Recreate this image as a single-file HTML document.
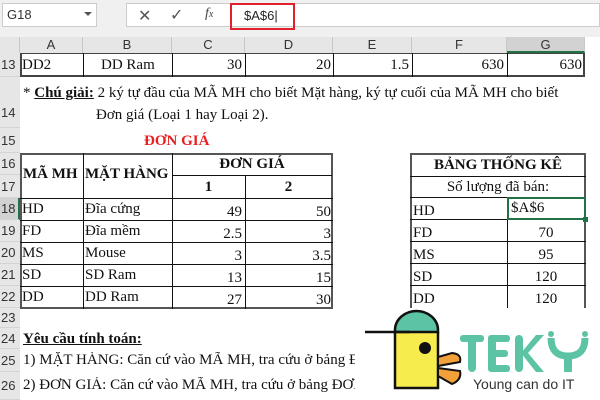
<!DOCTYPE html>
<html><head><meta charset="utf-8"><style>
*{margin:0;padding:0;box-sizing:border-box}
body{width:600px;height:400px;overflow:hidden;background:#fff;position:relative;font-family:"Liberation Serif",serif;color:#111}
.a{position:absolute}
.s{font-family:"Liberation Sans",sans-serif}
.rn{position:absolute;left:0;width:20px;background:#e6e6e6;font-family:"Liberation Sans",sans-serif;font-size:13px;color:#333;text-align:left;padding-left:1px;border-bottom:1px solid #d4d4d4}
.ch{position:absolute;top:37px;height:16px;background:#e6e6e6;font-family:"Liberation Sans",sans-serif;font-size:13px;color:#333;text-align:center;line-height:16px;border-right:1px solid #c8c8c8}
.t{font-size:15px;white-space:nowrap}
.hl{position:absolute;height:1px;background:#111}
.vl{position:absolute;width:1px;background:#111}
</style></head><body>
<div class="a" style="left:0;top:0;width:600px;height:37px;background:#f0f0f0"></div>
<div class="a s" style="left:2px;top:3px;width:95px;height:24px;background:#fff;border:1px solid #ccc;font-size:13px;line-height:22px;padding-left:4px;color:#333">G18</div>
<div class="a" style="left:84px;top:12px;width:0;height:0;border-left:4px solid transparent;border-right:4px solid transparent;border-top:4px solid #555"></div>
<div class="a" style="left:126px;top:3px;width:474px;height:24px;background:#fff;border:1px solid #ccc"></div>
<div class="a s" style="left:138px;top:6px;font-size:16px;color:#555">✕</div>
<div class="a s" style="left:170px;top:5px;font-size:16px;color:#555">✓</div>
<div class="a" style="left:205px;top:6px;font-size:14px;font-style:italic;color:#444">f<span style="font-size:10px">x</span></div>
<div class="a" style="left:230px;top:3px;width:65px;height:27px;border:2px solid #e0202a"></div>
<div class="a s" style="left:244px;top:8px;font-size:13px;color:#222">$A$6|</div>
<div class="ch" style="left:0;width:20px"></div>
<div class="ch" style="left:20px;width:63px">A</div>
<div class="ch" style="left:83px;width:89px">B</div>
<div class="ch" style="left:172px;width:73px">C</div>
<div class="ch" style="left:245px;width:88px">D</div>
<div class="ch" style="left:333px;width:79px">E</div>
<div class="ch" style="left:412px;width:95px">F</div>
<div class="ch" style="left:507px;width:78px;background:#d2d2d2;border-bottom:2px solid #217346">G</div>
<div class="ch" style="left:585px;width:15px;background:#fff;border:none"></div>
<div class="rn" style="top:53px;height:24px;line-height:24px">13</div>
<div class="rn" style="top:77px;height:51px;line-height:72px">14</div>
<div class="rn" style="top:128px;height:25px;line-height:26px">15</div>
<div class="rn" style="top:153px;height:22px;line-height:22px">16</div>
<div class="rn" style="top:175px;height:23px;line-height:23px">17</div>
<div class="rn" style="top:198px;height:22px;line-height:22px;background:#d2d2d2;border-right:2px solid #217346">18</div>
<div class="rn" style="top:220px;height:22px;line-height:22px">19</div>
<div class="rn" style="top:242px;height:22px;line-height:22px">20</div>
<div class="rn" style="top:264px;height:22px;line-height:22px">21</div>
<div class="rn" style="top:286px;height:22px;line-height:22px">22</div>
<div class="rn" style="top:308px;height:20px;line-height:20px">23</div>
<div class="rn" style="top:328px;height:21px;line-height:21px">24</div>
<div class="rn" style="top:349px;height:23px;line-height:23px">25</div>
<div class="rn" style="top:372px;height:28px;line-height:28px">26</div>
<div class="a" style="left:20px;top:53px;width:565px;height:24px;border:2px solid #444;border-top:1px solid #444"></div>
<div class="vl" style="left:83px;top:53px;height:24px"></div>
<div class="vl" style="left:172px;top:53px;height:24px"></div>
<div class="vl" style="left:245px;top:53px;height:24px"></div>
<div class="vl" style="left:333px;top:53px;height:24px"></div>
<div class="vl" style="left:412px;top:53px;height:24px"></div>
<div class="vl" style="left:507px;top:53px;height:24px"></div>
<div class="a t" style="left:22px;top:57px">DD2</div>
<div class="a t" style="left:101px;top:57px">DD Ram</div>
<div class="a t" style="left:172px;top:57px;width:70px;text-align:right">30</div>
<div class="a t" style="left:245px;top:57px;width:86px;text-align:right">20</div>
<div class="a t" style="left:333px;top:57px;width:76px;text-align:right">1.5</div>
<div class="a t" style="left:412px;top:57px;width:92px;text-align:right">630</div>
<div class="a t" style="left:507px;top:57px;width:75px;text-align:right">630</div>
<div class="a t" style="left:23px;top:85px">* <b><u>Chú giải:</u></b> 2 ký tự đầu của MÃ MH cho biết Mặt hàng, ký tự cuối của MÃ MH cho biết</div>
<div class="a t" style="left:96px;top:107px">Đơn giá (Loại 1 hay Loại 2).</div>
<div class="a t" style="left:144px;top:133px;color:#e82020;font-weight:bold">ĐƠN GIÁ</div>
<div class="a" style="left:20px;top:153px;width:313px;height:156px;border:2px solid #555"></div>
<div class="vl" style="left:83px;top:153px;height:156px"></div>
<div class="vl" style="left:172px;top:153px;height:156px"></div>
<div class="vl" style="left:245px;top:175px;height:134px"></div>
<div class="hl" style="left:172px;top:175px;width:160px"></div>
<div class="hl" style="left:20px;top:198px;width:313px"></div>
<div class="hl" style="left:20px;top:220px;width:313px"></div>
<div class="hl" style="left:20px;top:242px;width:313px"></div>
<div class="hl" style="left:20px;top:264px;width:313px"></div>
<div class="hl" style="left:20px;top:286px;width:313px"></div>
<div class="a t" style="left:23px;top:166px;font-weight:bold">MÃ MH</div>
<div class="a t" style="left:85px;top:166px;font-weight:bold">MẶT HÀNG</div>
<div class="a t" style="left:172px;top:156px;width:160px;text-align:center;font-weight:bold">ĐƠN GIÁ</div>
<div class="a t" style="left:172px;top:179px;width:73px;text-align:center;font-weight:bold">1</div>
<div class="a t" style="left:245px;top:179px;width:87px;text-align:center;font-weight:bold">2</div>
<div class="a t" style="left:22px;top:201px">HD</div>
<div class="a t" style="left:22px;top:223px">FD</div>
<div class="a t" style="left:22px;top:245px">MS</div>
<div class="a t" style="left:22px;top:267px">SD</div>
<div class="a t" style="left:22px;top:289px">DD</div>
<div class="a t" style="left:85px;top:201px">Đĩa cứng</div>
<div class="a t" style="left:85px;top:223px">Đĩa mềm</div>
<div class="a t" style="left:85px;top:245px">Mouse</div>
<div class="a t" style="left:85px;top:267px">SD Ram</div>
<div class="a t" style="left:85px;top:289px">DD Ram</div>
<div class="a t" style="left:172px;top:201px;width:70px;text-align:right;line-height:22px">49<br>2.5<br>3<br>13<br>27</div>
<div class="a t" style="left:245px;top:201px;width:86px;text-align:right;line-height:22px">50<br>3<br>3.5<br>15<br>30</div>
<div class="a" style="left:410px;top:153px;width:176px;height:160px;border:2px solid #555;border-bottom:none"></div>
<div class="hl" style="left:410px;top:176px;width:176px"></div>
<div class="hl" style="left:410px;top:197px;width:176px"></div>
<div class="hl" style="left:410px;top:219px;width:176px"></div>
<div class="hl" style="left:410px;top:241px;width:176px"></div>
<div class="hl" style="left:410px;top:263px;width:176px"></div>
<div class="hl" style="left:410px;top:285px;width:176px"></div>
<div class="vl" style="left:507px;top:197px;height:116px"></div>
<div class="a t" style="left:410px;top:157px;width:176px;text-align:center;font-weight:bold">BẢNG THỐNG KÊ</div>
<div class="a t" style="left:410px;top:179px;width:176px;text-align:center">Số lượng đã bán:</div>
<div class="a t" style="left:413px;top:200px;line-height:22px">HD<br>FD<br>MS<br>SD<br>DD</div>
<div class="a t" style="left:507px;top:222px;width:78px;text-align:center;line-height:22px">70<br>95<br>120<br>120</div>
<div class="a" style="left:507px;top:197px;width:79px;height:23px;border:2px solid #217346"></div>
<div class="a" style="left:583px;top:217px;width:5px;height:5px;background:#217346"></div>
<div class="a t" style="left:511px;top:200px">$A$6</div>
<div class="a t" style="left:23px;top:331px;font-weight:bold"><u>Yêu cầu tính toán:</u></div>
<div class="a t" style="left:23px;top:352px;width:340px;overflow:hidden">1) MẶT HÀNG: Căn cứ vào MÃ MH, tra cứu ở bảng ĐƠN GIÁ</div>
<div class="a t" style="left:23px;top:377px;width:340px;overflow:hidden">2) ĐƠN GIÁ: Căn cứ vào MÃ MH, tra cứu ở bảng ĐƠN GIÁ</div>
<div class="a" style="left:355px;top:308px;width:245px;height:92px;background:#fff"></div>
<svg class="a" style="left:350px;top:280px" width="250" height="120" viewBox="0 0 250 120">
  <path d="M45 52 V108 H88 V52" fill="#f7ec4e" stroke="#111" stroke-width="2.5"/>
  <path d="M45 52 V50 A21.5 19 0 0 1 88 50 V52 Z" fill="#5cc3a4" stroke="#111" stroke-width="2.5"/>
  <line x1="15" y1="52" x2="60" y2="52" stroke="#111" stroke-width="2.5"/>
  <circle cx="75" cy="68" r="6" fill="#111"/>
  <path d="M88 77 L102 73 Q112 74 110 82 L88 86 Z" fill="#f2a13a" stroke="#111" stroke-width="2"/>
  <path d="M88 88 L110 91 Q112 100 102 104 L88 96 Z" fill="#f2a13a" stroke="#111" stroke-width="2"/>
  <g fill="#5cc3a4">
    <rect x="110" y="55" width="24" height="7" rx="3"/><rect x="118" y="55" width="8" height="37" rx="4"/>
    <rect x="138" y="55" width="22" height="7" rx="3"/><rect x="138" y="70" width="20" height="7" rx="3"/><rect x="138" y="85" width="22" height="7" rx="3"/><rect x="138" y="55" width="8" height="37" rx="4"/>
    <rect x="165" y="55" width="8" height="37" rx="4"/><path d="M171 73 L186 55 H194 L178 73 L194 92 H186 Z"/>
  </g>
  <path d="M201 58 Q201 76 218 76 Q235 76 235 58" fill="none" stroke="#5cc3a4" stroke-width="7"/>
  <rect x="214" y="74" width="8" height="18" fill="#5cc3a4"/>
  <circle cx="201" cy="54" r="3" fill="#5cc3a4"/>
  <circle cx="235" cy="54" r="3" fill="#5cc3a4"/>
  <text x="123" y="109" font-family="Liberation Sans, sans-serif" font-size="14" fill="#333">Young can do IT</text>
</svg>
</body></html>
